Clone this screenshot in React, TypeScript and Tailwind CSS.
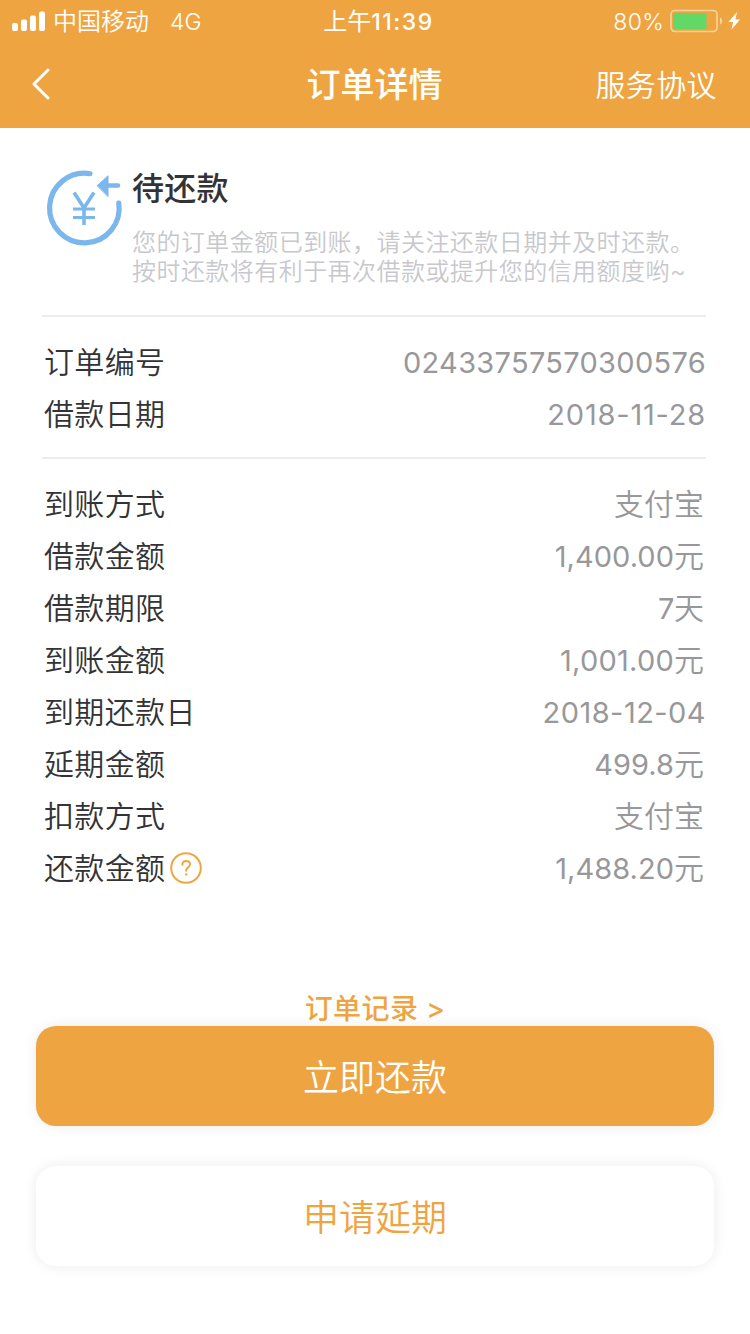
import React from "react";

type Row = { label: string; value: string; unit?: string; spacing?: string; help?: boolean };

const orderRows: Row[] = [
  { label: "订单编号", value: "02433757570300576", spacing: "tracking-[0.3px]" },
  { label: "借款日期", value: "2018-11-28", spacing: "tracking-[0.8px]" },
];

const loanRows: Row[] = [
  { label: "到账方式", value: "", unit: "支付宝" },
  { label: "借款金额", value: "1,400.00", unit: "元" },
  { label: "借款期限", value: "7", unit: "天", spacing: "tracking-[-0.5px]" },
  { label: "到账金额", value: "1,001.00", unit: "元", spacing: "tracking-[0.25px]" },
  { label: "到期还款日", value: "2018-12-04", spacing: "tracking-[0.45px]" },
  { label: "延期金额", value: "499.8", unit: "元" },
  { label: "扣款方式", value: "", unit: "支付宝" },
  { label: "还款金额", value: "1,488.20", unit: "元", help: true },
];

function DetailRow({ row }: { row: Row }) {
  return (
    <div className="flex h-[52px] items-center justify-between">
      <div className="flex items-center text-[30px] leading-[50px] tracking-[0.35px] text-[#333336]">
        <span className="pb-[2px]">{row.label}</span>
        {row.help && (
          <svg className="mb-[2px] ml-[5px] h-8 w-8" viewBox="0 0 32 32" fill="none" stroke="#efa642">
            <circle cx="16" cy="16" r="14.8" strokeWidth="2" />
            <path d="M12.4 12.7c0-2.4 1.5-3.8 3.8-3.8 2.2 0 3.8 1.3 3.8 3.4 0 2.9-3.8 3.2-3.8 6.5" strokeWidth="2" strokeLinecap="round" />
            <circle cx="16.2" cy="22.4" r="1.2" fill="#efa642" stroke="none" />
          </svg>
        )}
      </div>
      <div className="flex items-center leading-[50px] text-[#98989b]">
        {row.value && <span className={`text-[29px] font-normal ${row.spacing ?? "tracking-[0.05px]"}`}>{row.value}</span>}
        {row.unit && <span className="mr-[2px] pb-[2px] text-[30px]">{row.unit}</span>}
      </div>
    </div>
  );
}

export default function App() {
  return (
    <div className="flex h-[1334px] w-[750px] flex-col overflow-hidden bg-white font-['Inter','Noto_Sans_CJK_SC',sans-serif] font-[350]">
      <header className="h-32 shrink-0 bg-[#efa442] text-white">
        <div className="grid h-10 grid-cols-[1fr_auto_1fr] items-center pr-[8px] pl-3 text-[23px] leading-10">
          <div className="flex items-center">
            <svg className="h-5 w-[33px]" viewBox="0 0 33 20" fill="white">
              <rect x="0" y="12" width="6" height="8" rx="2" />
              <rect x="9" y="8.5" width="6" height="11.5" rx="2" />
              <rect x="18" y="4.5" width="6" height="15.5" rx="2" />
              <rect x="27" y="0.5" width="6" height="19.5" rx="2" />
            </svg>
            <span className="ml-[8px] pt-[2px] text-[24px]">中国移动</span>
            <span className="ml-[21px] pt-[2px]">4G</span>
          </div>
          <div className="flex items-center pt-[2px] pl-[3px] font-medium">
            <span className="text-[24px] font-normal">上午</span>
            <span className="text-[23px] tracking-[1.5px]">11:39</span>
          </div>
          <div className="flex items-center justify-end">
            <span className="pt-[2px] tracking-[0.3px]">80%</span>
            <svg className="ml-[6px] h-6 w-[72px]" viewBox="0 0 72 24" fill="none">
              <rect x="1" y="1.5" width="46" height="21" rx="4" stroke="#f8d39c" strokeWidth="1.7" />
              <rect x="3.5" y="4" width="33" height="16" rx="1.5" fill="#63d866" />
              <path d="M50 8.5c3 1 3 6 0 7z" fill="#f8d39c" />
              <path d="M67 3 58.5 13h4.6L61.5 20.5 70 10.5h-4.6z" fill="white" />
            </svg>
          </div>
        </div>
        <div className="grid h-[88px] grid-cols-[1fr_auto_1fr] items-center pr-[33px] pl-[32px]">
          <svg className="h-8 w-[18px]" viewBox="0 0 18 32" fill="none" stroke="white" strokeWidth="3" strokeLinecap="round" strokeLinejoin="round">
            <path d="M16 2 2 16l14 14" />
          </svg>
          <h1 className="pt-[2px] text-[34px] leading-[50px] font-medium">订单详情</h1>
          <span className="pt-[2px] text-right text-[30px] leading-[50px] tracking-[0.4px]">服务协议</span>
        </div>
      </header>

      <main className="flex flex-col px-[44px]">
        <section className="flex h-[187px] shrink-0 pt-[40px]">
          <svg className="h-[80px] w-[80px] shrink-0" viewBox="44 168 80 80" fill="none" stroke="#7bb6ed" strokeLinecap="round">
            <path d="M90 173.7A34.8 34.8 0 1 0 118.8 203" strokeWidth="5.2" />
            <path d="M107 185.5h11" strokeWidth="4.6" />
            <path d="M97.5 185.5 108 175.8v20.4z" fill="#7bb6ed" strokeWidth="1" strokeLinejoin="round" />
            <path d="m74 192.5 10 15.5 10-15.5M84 208v17" strokeWidth="3.6" strokeLinecap="butt" />
            <path d="M73 209h22M73 217.5h22" strokeWidth="3" strokeLinecap="butt" />
          </svg>
          <div className="ml-[8px]">
            <h2 className="-mt-[4px] text-[32px] leading-[50px] font-medium tracking-[0.3px] text-[#333336]">待还款</h2>
            <p className="mt-[14px] text-[24px] leading-[29px] tracking-[0.45px] whitespace-nowrap text-[#c8c8cc]">
              您的订单金额已到账，请关注还款日期并及时还款。
              <br />
              按时还款将有利于再次借款或提升您的信用额度哟~
            </p>
          </div>
        </section>
        <section className="-ml-[2px] h-[144px] shrink-0 border-y-2 border-[#ededed] pt-5 pl-[2px]">
          {orderRows.map((row) => (
            <DetailRow key={row.label} row={row} />
          ))}
        </section>
        <section className="pt-[20px]">
          {loanRows.map((row) => (
            <DetailRow key={row.label} row={row} />
          ))}
        </section>
      </main>

      <footer className="mt-[93px] flex flex-col px-9">
        <a className="mb-[-2px] h-10 pt-[1px] text-center text-[28px] leading-10 font-medium tracking-[0.4px] text-[#efa442]">
          订单记录 &gt;
        </a>
        <button className="h-[100px] rounded-[20px] bg-[#efa442] pt-[3px] text-[36px] text-white shadow-[0_0_14px_rgba(0,0,0,0.08)]">
          立即还款
        </button>
        <button className="mt-10 h-[100px] rounded-[20px] bg-white pt-[3px] text-[36px] text-[#efa442] shadow-[0_0_14px_rgba(0,0,0,0.08)]">
          申请延期
        </button>
      </footer>
    </div>
  );
}
